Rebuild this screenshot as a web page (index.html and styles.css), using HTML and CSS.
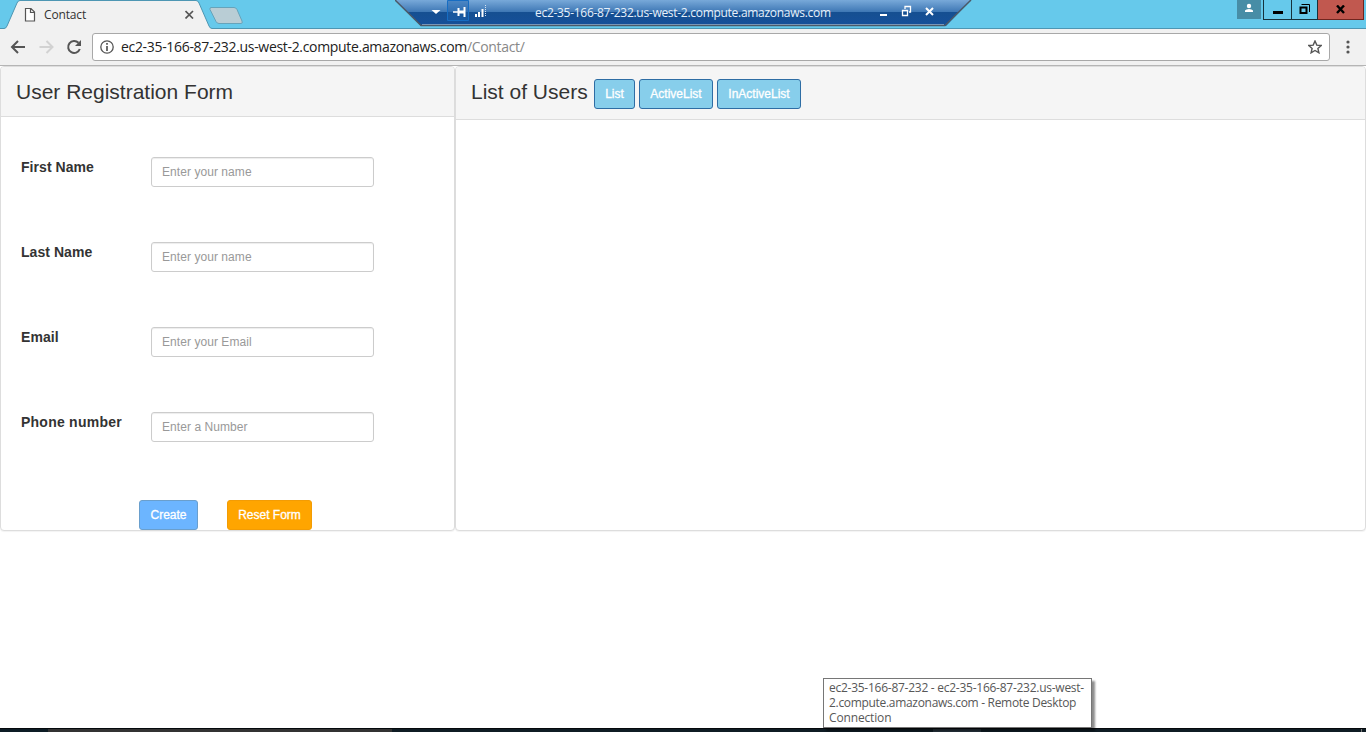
FILE: index.html
```html
<!DOCTYPE html>
<html lang="en">
<head>
<meta charset="utf-8">
<title>Contact</title>
<link rel="stylesheet" href="styles.css">
</head>
<body>
<div class="screen">
  <header class="titlebar">
    <svg class="tab-shape" width="250" height="29" viewBox="0 0 250 29">
      <path d="M0 28.5H4Q6 28.5 7 26L17 3Q18 .5 20 .5H196Q198 .5 199 3L209 26Q210 28.5 212 28.5V29H0Z" fill="#f1f1f1"/>
      <path d="M0 28.5H4Q6 28.5 7 26L17 3Q18 .5 20 .5H196Q198 .5 199 3L209 26Q210 28.5 212 28.5" fill="none" stroke="#4d96b3"/>
      <path d="M211 7.5H234Q236 7.5 237 9.500L242 21Q243 23.500 241 23.500H219Q217 23.500 216 21.500L210 9.500Q209.500 7.500 211 7.500Z" fill="#b9cdd5" stroke="#66a3ba"/>
    </svg>
    <div class="tab">
      <svg width="12" height="15" viewBox="0 0 12 15"><path d="M1.500 1.500H7L10.500 5V14H1.500Z M6.500 1.500V5.500H10.500" fill="#fff" stroke="#555" stroke-width="1.200"/></svg>
      <span class="tab-title">Contact</span>
      <svg class="tab-close" width="9" height="9" viewBox="0 0 9 9"><path d="M.5 1L8 8.500M8 1L.5 8.500" stroke="#555" stroke-width="1.700"/></svg>
    </div>
    <div class="window-buttons">
      <div class="user"><svg width="10" height="10" viewBox="0 0 10 10"><circle cx="5" cy="3" r="2.200" fill="#fff"/><path d="M1 9V7.500Q2 6 5 6T9 7.500V9Z" fill="#fff"/></svg></div>
      <div class="win win-min"><svg width="10" height="12"><path d="M0 8.500H10" stroke="#000" stroke-width="3"/></svg></div>
      <div class="win win-max"><svg width="11" height="11" viewBox="0 0 11 11"><path d="M1.500 3.500H7.500V9H1.500Z" fill="none" stroke="#000" stroke-width="2"/><path d="M2.500 .5H10.500V8" fill="none" stroke="#000"/></svg></div>
      <div class="win win-close"><svg width="10" height="9" viewBox="0 0 10 9"><path d="M1 .5L8 8M8 .5L1 8" stroke="#000" stroke-width="2.400"/></svg></div>
    </div>
    <div class="remote-bar">
      <svg class="remote-shape" width="578" height="27" viewBox="0 0 578 27">
        <defs><linearGradient id="g" x1="0" y1="0" x2="0" y2="1"><stop offset="0" stop-color="#78a9d9"/><stop offset=".45" stop-color="#3f78b5"/><stop offset=".46" stop-color="#154f91"/><stop offset="1" stop-color="#16509a"/></linearGradient></defs>
        <path d="M0 0H576L551 26H26Z" fill="url(#g)"/>
        <path d="M0 0L26 25.500H550L576 0" fill="none" stroke="#4b5968" stroke-width="1.500"/>
        <path d="M27 24.500H549" stroke="#a0b5c9" stroke-width=".7"/>
        <path d="M36.500 10H45.500L41 14Z" fill="#fff"/>
        <path d="M52.500 .5H73.500V20.500H52.500Z" fill="#1c61ad" fill-opacity=".45" stroke="#176dc3"/>
        <path d="M58 12H63" stroke="#fff" stroke-width="1.500"/><path d="M63.500 8V16M69.500 7V17" stroke="#fff" stroke-width="2"/><path d="M64 12H70" stroke="#fff" stroke-width="3"/>
        <path d="M81 14V17M84 12V17M87.500 9V17" stroke="#fff" stroke-width="2"/><path d="M90.500 5V17" stroke="#d5e3f1" stroke-dasharray="1 1"/>
        <path d="M485 15H492" stroke="#fff" stroke-width="2"/>
        <path d="M507.500 10.500H512.500V15.500H507.500ZM510 9V6.500H515.500V12H514" fill="none" stroke="#fff" stroke-width="1.300"/>
        <path d="M531 8L538 15M538 8L531 15" stroke="#fff" stroke-width="2"/>
      </svg>
      <span class="remote-title">ec2-35-166-87-232.us-west-2.compute.amazonaws.com</span>
    </div>
  </header>

  <nav class="toolbar">
    <svg class="nav-icons" width="72" height="16" viewBox="0 0 72 16">
      <path d="M15 8H2.500M8 2L2 8L8 14" fill="none" stroke="#555" stroke-width="2"/>
      <path d="M29.500 8H42M36.500 2L42.500 8L36.500 14" fill="none" stroke="#d2d2d2" stroke-width="2"/>
      <path d="M68.500 3.800A6 6 0 1 0 69.800 10" fill="none" stroke="#555" stroke-width="2"/><path d="M71 1V7H65Z" fill="#555"/>
    </svg>
    <div class="address">
      <svg width="14" height="14" viewBox="0 0 14 14"><circle cx="7" cy="7" r="6.200" fill="none" stroke="#555" stroke-width="1.300"/><path d="M7 6V11M7 3V4.700" stroke="#555" stroke-width="1.700"/></svg>
      <span class="url">ec2-35-166-87-232.us-west-2.compute.amazonaws.com<span class="path">/Contact/</span></span>
      <svg class="star" width="14" height="14" viewBox="0 0 14 14"><path d="M7 1L8.800 5.100L13.200 5.500L9.900 8.400L10.900 12.800L7 10.500L3.100 12.800L4.100 8.400L.8 5.500L5.200 5.100Z" fill="none" stroke="#555" stroke-width="1.400"/></svg>
    </div>
    <svg class="dots" width="4" height="14"><circle cx="2" cy="2" r="1.600" fill="#555"/><circle cx="2" cy="7" r="1.600" fill="#555"/><circle cx="2" cy="12" r="1.600" fill="#555"/></svg>
  </nav>

  <main class="page">
    <section class="panel registration">
      <div class="panel-heading"><h1>User Registration Form</h1></div>
      <form class="form">
        <div class="row"><label for="first">First Name</label><input id="first" placeholder="Enter your name"></div>
        <div class="row"><label for="last">Last Name</label><input id="last" placeholder="Enter your name"></div>
        <div class="row"><label for="email">Email</label><input id="email" placeholder="Enter your Email"></div>
        <div class="row"><label class="phone" for="phone">Phone number</label><input id="phone" placeholder="Enter a Number"></div>
        <div class="actions"><button type="button" class="btn create">Create</button><button type="button" class="btn reset">Reset Form</button></div>
      </form>
    </section>
    <section class="panel users">
      <div class="panel-heading list-heading"><h1 class="list-title">List of Users</h1>
        <button type="button" class="btn list">List</button><button type="button" class="btn active">ActiveList</button><button type="button" class="btn inactive">InActiveList</button>
      </div>
    </section>
  </main>

  <footer class="taskbar"><span class="start"></span><span class="search"></span><span class="tasks"></span><span class="current"></span><span class="rest"></span><span class="peek"></span></footer>
  <div class="tooltip"><span class="tip1">ec2-35-166-87-232 - ec2-35-166-87-232.us-west-</span><span class="tip2">2.compute.amazonaws.com - Remote Desktop</span><span class="tip3">Connection</span></div>
</div>
</body>
</html>
```
FILE: styles.css
```css
* { box-sizing: border-box; }
body { margin: 0; background: #fff; font-family: "Liberation Sans", Arial, sans-serif; color: #333; overflow: hidden; }
.screen { position: relative; display: flex; flex-direction: column; width: 1366px; height: 732px; }
svg { display: block; flex: none; }

.titlebar { position: relative; display: flex; justify-content: space-between; height: 29px; background: #66c9eb; border-bottom: 1px solid #4d96b3; font-family: "Open Sans", "Noto Sans", sans-serif; }
.tab-shape { position: absolute; left: 0; top: 0; }
.tab { position: relative; display: flex; align-items: center; width: 194px; height: 29px; padding-left: 24px; }
.tab-title { margin-left: 8px; font-size: 12px; line-height: 16px; letter-spacing: -.15px; color: #333; }
.tab-close { margin-left: auto; }
.window-buttons { display: flex; padding-right: 2px; height: 20px; }
.user { display: flex; justify-content: center; width: 24px; height: 19px; margin-right: 2px; padding-top: 3px; background: #478da6; }
.win { display: flex; justify-content: center; align-items: center; height: 20px; border: 1px solid #16323c; border-top: 0; border-left-width: 0; }
.win-min { width: 29px; border-left-width: 1px; }
.win-max { width: 26px; }
.win-close { width: 46px; background: #c1584f; border-color: #70251f; }
.remote-bar { position: absolute; left: 395px; top: 0; width: 578px; height: 27px; }
.remote-shape { position: absolute; left: 0; top: 0; }
.remote-title { position: relative; display: block; margin-left: 140px; padding-top: 5px; font-size: 12px; line-height: 16px; letter-spacing: -.29px; color: #e6f0fa; white-space: nowrap; }

.toolbar { display: flex; align-items: center; height: 37px; padding: 0 16px 0 10px; background: #f1f1f1; border-bottom: 1px solid #b5b5b5; }
.nav-icons { margin-right: 10px; }
.address { display: flex; align-items: center; width: 1238px; height: 28px; padding: 0 7px; background: #fff; border: 1px solid #a8a8a8; border-radius: 3px; }
.url { margin-left: 7px; font: 14px/20px "Open Sans", "Noto Sans", sans-serif; letter-spacing: -.32px; color: #222; white-space: nowrap; }
.path { color: #888; }
.star { margin-left: auto; }
.dots { margin-left: auto; }

.page { display: grid; grid-template-columns: 455px 911px; height: 465px; }
.panel { background: #fff; border: 1px solid #ddd; border-radius: 4px; box-shadow: 0 1px 1px rgba(0,0,0,.05); overflow: hidden; }
.panel-heading { height: 50px; padding: 12px 15px; background: #f5f5f5; border-bottom: 1px solid #ddd; }
h1 { margin: 0; font-size: 21px; line-height: 26px; font-weight: 400; white-space: nowrap; }
.list-heading { display: flex; height: 53px; gap: 4px; }
.list-title { width: 119px; }
.form { display: flex; flex-direction: column; padding: 40px 20px 0; }
.row { display: flex; height: 85px; }
label { width: 130px; font-size: 14px; line-height: 20px; font-weight: 700; letter-spacing: .05px; white-space: nowrap; }
.phone { letter-spacing: .24px; }
input { width: 223px; height: 30px; padding: 5px 10px; font: 12px/18px "Liberation Sans", Arial, sans-serif; letter-spacing: .06px; border: 1px solid #ccc; border-radius: 3px; box-shadow: inset 0 1px 1px rgba(0,0,0,.075); }
input::placeholder { color: #999; opacity: 1; }
.actions { display: flex; gap: 29px; padding: 3px 0 0 118px; }
.btn { height: 30px; padding: 0; font: 12px/18px "Liberation Sans", Arial, sans-serif; color: #fff; border: 1px solid #2e6da4; border-radius: 3px; background: #87ceeb; text-align: center; white-space: nowrap; }
.btn { -webkit-text-stroke: .3px #fff; }
.list { width: 41px; }
.active { width: 74px; }
.inactive { width: 84px; }
.create { width: 59px; background: #6cb5ff; border-color: #6a9fcd; }
.reset { width: 85px; background: #ffa500; border-color: #f39c04; }

.taskbar { display: flex; height: 4px; margin-top: auto; background: #0f1c24; border-top: 1px solid #05090c; }
.start { width: 48px; background: #0d1c25; }
.search { width: 344px; background: #333; }
.tasks { width: 541px; }
.current { width: 48px; background: #26323c; }
.rest { width: 380px; }
.peek { width: 1px; background: #777; }
.tooltip { position: absolute; left: 823px; top: 678px; display: flex; flex-direction: column; width: 269px; height: 50px; padding: 1px 5px; background: #fff; border: 1px solid #767676; box-shadow: 3px 3px 2px rgba(0,0,0,.45); font: 12px/15px "Open Sans", "Noto Sans", sans-serif; color: #575757; white-space: nowrap; letter-spacing: -.3px; }
.tip1 { letter-spacing: -.26px; }
.tip2 { letter-spacing: -.31px; }
.tip3 { letter-spacing: -.15px; }
```
